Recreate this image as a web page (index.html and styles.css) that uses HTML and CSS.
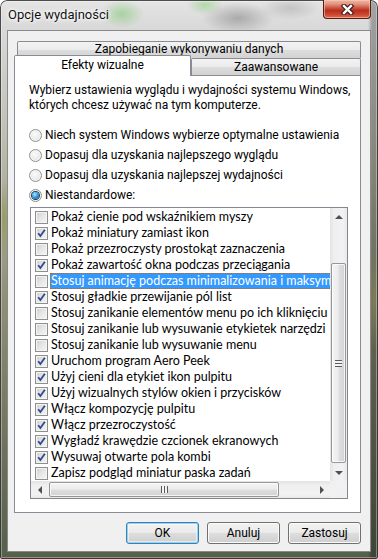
FILE: index.html
```html
<!DOCTYPE html>
<html lang="pl">
<head>
<meta charset="utf-8">
<title>Opcje wydajności</title>
<link rel="stylesheet" href="styles.css">
</head>
<body>
<svg class="defs" width="0" height="0" aria-hidden="true">
  <defs>
    <symbol id="chk" viewBox="0 0 11 11">
      <path d="M2.2 5.2 L4.4 8 L8.8 1.8" fill="none" stroke="#2b4c8c" stroke-width="1.8" stroke-linejoin="miter"/>
    </symbol>
  </defs>
</svg>
<div class="window">
  <div class="titlebar">
    <span class="title">Opcje wydajności</span>
    <div class="close">
      <svg width="15" height="11" viewBox="0 0 15 11"><path d="M4 2 L11 9 M11 2 L4 9" stroke="#3a2020" stroke-width="4.6" stroke-linecap="square"/><path d="M4 2 L11 9 M11 2 L4 9" stroke="#ffffff" stroke-width="2.4" stroke-linecap="square"/></svg>
    </div>
  </div>
  <div class="client">
    <div class="tabs">
      <div class="tabrow row1"><div class="tab wide">Zapobieganie wykonywaniu danych</div></div>
      <div class="tabrow row2"><div class="tab active">Efekty wizualne</div><div class="tab rest">Zaawansowane</div></div>
    </div>
    <div class="pane">
      <p class="intro">Wybierz ustawienia wyglądu i wydajności systemu Windows,<br>których chcesz używać na tym komputerze.</p>
      <div class="radios">
        <div class="radio"><span class="rb"></span>Niech system Windows wybierze optymalne ustawienia</div>
        <div class="radio"><span class="rb"></span>Dopasuj dla uzyskania najlepszego wyglądu</div>
        <div class="radio"><span class="rb"></span>Dopasuj dla uzyskania najlepszej wydajności</div>
        <div class="radio"><span class="rb on"></span>Niestandardowe:</div>
      </div>
      <div class="listbox">
        <div class="items">
          <div class="item"><span class="cb"></span><span class="lbl">Pokaż cienie pod wskaźnikiem myszy</span></div>
          <div class="item"><span class="cb"><svg><use href="#chk"/></svg></span><span class="lbl">Pokaż miniatury zamiast ikon</span></div>
          <div class="item"><span class="cb"></span><span class="lbl">Pokaż przezroczysty prostokąt zaznaczenia</span></div>
          <div class="item"><span class="cb"><svg><use href="#chk"/></svg></span><span class="lbl">Pokaż zawartość okna podczas przeciągania</span></div>
          <div class="item sel"><span class="cb"></span><span class="lbl">Stosuj animację podczas minimalizowania i maksymalizowania okien</span></div>
          <div class="item"><span class="cb"><svg><use href="#chk"/></svg></span><span class="lbl">Stosuj gładkie przewijanie pól list</span></div>
          <div class="item"><span class="cb"></span><span class="lbl">Stosuj zanikanie elementów menu po ich kliknięciu</span></div>
          <div class="item"><span class="cb"></span><span class="lbl">Stosuj zanikanie lub wysuwanie etykietek narzędzi</span></div>
          <div class="item"><span class="cb"></span><span class="lbl">Stosuj zanikanie lub wysuwanie menu</span></div>
          <div class="item"><span class="cb"><svg><use href="#chk"/></svg></span><span class="lbl">Uruchom program Aero Peek</span></div>
          <div class="item"><span class="cb"><svg><use href="#chk"/></svg></span><span class="lbl">Użyj cieni dla etykiet ikon pulpitu</span></div>
          <div class="item"><span class="cb"><svg><use href="#chk"/></svg></span><span class="lbl">Użyj wizualnych stylów okien i przycisków</span></div>
          <div class="item"><span class="cb"><svg><use href="#chk"/></svg></span><span class="lbl">Włącz kompozycję pulpitu</span></div>
          <div class="item"><span class="cb"><svg><use href="#chk"/></svg></span><span class="lbl">Włącz przezroczystość</span></div>
          <div class="item"><span class="cb"><svg><use href="#chk"/></svg></span><span class="lbl">Wygładź krawędzie czcionek ekranowych</span></div>
          <div class="item"><span class="cb"><svg><use href="#chk"/></svg></span><span class="lbl">Wysuwaj otwarte pola kombi</span></div>
          <div class="item"><span class="cb"></span><span class="lbl">Zapisz podgląd miniatur paska zadań</span></div>
        </div>
        <div class="vscroll">
          <div class="arrow"><span class="tri up"></span></div>
          <div class="vtrack"><div class="vthumb"><span class="hgrip"></span></div></div>
          <div class="arrow"><span class="tri down"></span></div>
        </div>
        <div class="hscroll">
          <div class="arrow"><span class="tri left"></span></div>
          <div class="htrack"><div class="hthumb"><span class="vgrip"></span></div></div>
          <div class="arrow"><span class="tri right"></span></div>
        </div>
        <div class="corner"></div>
      </div>
    </div>
    <div class="buttons">
      <div class="btn default">OK</div>
      <div class="btn">Anuluj</div>
      <div class="btn">Zastosuj</div>
    </div>
  </div>
</div>
</body>
</html>
```
FILE: styles.css
```css
* { box-sizing: border-box; }
html, body { margin: 0; padding: 0; background: #ffffff; }
body {
  width: 378px;
  height: 559px;
  overflow: hidden;
  font-family: Roboto, "Liberation Sans", sans-serif;
  font-size: 12px;
  color: #000;
}
.defs { position: absolute; width: 0; height: 0; overflow: hidden; }

.window {
  width: 378px;
  height: 559px;
  display: flex;
  flex-direction: column;
  border-radius: 7px 7px 2px 2px;
  overflow: hidden;
  box-shadow: inset 0 0 0 1px rgba(35, 35, 35, 0.8), inset 0 0 0 2px rgba(255, 255, 255, 0.35);
  background:
    radial-gradient(ellipse 22px 14px at 122px 14px, rgba(150, 205, 140, 0.75), rgba(150, 205, 140, 0) 100%),
    radial-gradient(ellipse 18px 10px at 205px 5px, rgba(160, 212, 150, 0.75), rgba(160, 212, 150, 0) 100%),
    radial-gradient(ellipse 36px 16px at 238px 18px, rgba(120, 120, 120, 0.5), rgba(120, 120, 120, 0) 100%),
    radial-gradient(ellipse 30px 12px at 290px 8px, rgba(150, 150, 150, 0.4), rgba(150, 150, 150, 0) 100%),
    radial-gradient(ellipse 8px 40px at 4px 220px, rgba(150, 150, 95, 0.8), rgba(150, 150, 95, 0) 100%),
    radial-gradient(ellipse 8px 50px at 374px 300px, rgba(140, 140, 90, 0.6), rgba(140, 140, 90, 0) 100%),
    linear-gradient(to right, rgba(0, 0, 0, 0) 0, rgba(0, 0, 0, 0) 368px, rgba(0, 0, 0, 0.28) 372px),
    linear-gradient(to bottom, #e4e4e4 0px, #d8d8d8 30px, #bbbbac 150px, #8f8f76 300px, #6f715c 450px, #53604a 559px);
}

.titlebar {
  height: 30px;
  flex: none;
  display: flex;
  align-items: flex-start;
  padding-left: 8px;
}
.title {
  margin-top: 7px;
  font-size: 13px;
  line-height: 16px;
  color: #111;
  text-shadow: 0 0 6px #fff, 0 0 4px #fff, 0 0 2px #fff;
}
.close {
  margin-left: auto;
  margin-right: 7px;
  width: 48px;
  height: 19px;
  border: 1px solid #4f1c16;
  border-top: none;
  border-radius: 0 0 4px 4px;
  background: linear-gradient(#efb7a6 0%, #e39680 22%, #cf5a44 42%, #b92f1f 58%, #c9432e 78%, #e26a4f 100%);
  box-shadow: inset 0 0 0 1px rgba(255, 210, 190, 0.55);
  display: flex;
  align-items: center;
  justify-content: center;
}
.close svg { display: block; }

.client {
  flex: 1;
  margin: 0 7px 7px 7px;
  border: 1px solid rgba(70, 70, 70, 0.6);
  background: #f0f0f0;
  padding: 10px 9px 7px 6px;
  display: flex;
  flex-direction: column;
}

.tabrow { display: flex; height: 17px; }
.row1 { padding-left: 3px; }
.row2 { align-items: flex-end; }
.tab {
  border: 1px solid #898c95;
  border-bottom: none;
  border-radius: 2px 2px 0 0;
  background: linear-gradient(#f3f3f3 0%, #ebebeb 48%, #dddddd 52%, #d2d2d2 100%);
  text-align: center;
  line-height: 15px;
  height: 17px;
  white-space: nowrap;
}
.tab.wide { flex: 1; }
.tab.rest { flex: 1; line-height: 16px; }
.tab.active {
  width: 177px;
  height: 21px;
  margin-bottom: -1px;
  background: #ffffff;
  position: relative;
  z-index: 1;
  line-height: 19px;
}

.pane {
  height: 438px;
  flex: none;
  border: 1px solid #898c95;
  background: #ffffff;
  padding: 7px 12px 0 14px;
}
.intro { margin: 0; line-height: 15px; white-space: nowrap; }
.radios { margin-top: 12px; }
.radio {
  height: 20px;
  display: flex;
  align-items: center;
  white-space: nowrap;
}
.rb {
  flex: none;
  width: 13px;
  height: 13px;
  margin-right: 3px;
  border-radius: 50%;
  border: 1px solid #8e8f8f;
  background: radial-gradient(circle at 45% 40%, #fbfbfb 0%, #eeeeee 45%, #d2d2d2 100%);
  box-shadow: inset 0 0 0 1px #f6f6f6;
  display: flex;
  align-items: center;
  justify-content: center;
}
.rb.on::after {
  content: "";
  width: 7px;
  height: 7px;
  border-radius: 50%;
  background: radial-gradient(circle at 40% 35%, #a8ecff 0%, #3a9de0 45%, #124f8c 90%);
  box-shadow: 0 0 0 1px #1b3b5e;
}

.listbox {
  margin-top: 2px;
  margin-left: 1px;
  width: 318px;
  height: 292px;
  border: 1px solid #828790;
  display: grid;
  grid-template-columns: 299px 17px;
  grid-template-rows: 273px 17px;
  background: #ffffff;
}
.items {
  overflow: hidden;
  padding-top: 1px;
  font-family: Lato, Roboto, sans-serif;
  font-size: 12.5px;
}
.item {
  height: 16px;
  display: flex;
  align-items: center;
  padding-left: 4px;
  white-space: nowrap;
}
.cb {
  flex: none;
  width: 13px;
  height: 13px;
  border: 1px solid #8e8f8f;
  background: linear-gradient(135deg, #cfd0d2 0%, #e6e6e7 50%, #f6f6f6 100%);
  box-shadow: inset 0 0 0 1px #f3f3f3;
}
.cb svg { display: block; width: 11px; height: 11px; }
.lbl {
  margin-left: 2px;
  border: 1px solid transparent;
  line-height: 14px;
}
.item.sel .lbl {
  background: #3399ff;
  color: #ffffff;
  border: 1px dotted #cc6600;
}

.vscroll {
  grid-column: 2;
  grid-row: 1;
  display: flex;
  flex-direction: column;
  background: linear-gradient(to right, #e4e4e4 0%, #efefef 25%, #f2f2f2 75%, #e8e8e8 100%);
}
.hscroll {
  grid-column: 1;
  grid-row: 2;
  display: flex;
  background: linear-gradient(to bottom, #e4e4e4 0%, #efefef 25%, #f2f2f2 75%, #e8e8e8 100%);
}
.corner { grid-column: 2; grid-row: 2; background: #f0f0f0; }
.arrow {
  flex: none;
  width: 17px;
  height: 17px;
  display: flex;
  align-items: center;
  justify-content: center;
}
.tri { width: 0; height: 0; }
.tri.up { border-left: 4px solid transparent; border-right: 4px solid transparent; border-bottom: 4px solid #505050; }
.tri.down { border-left: 4px solid transparent; border-right: 4px solid transparent; border-top: 4px solid #505050; }
.tri.left { border-top: 4px solid transparent; border-bottom: 4px solid transparent; border-right: 4px solid #505050; }
.tri.right { border-top: 4px solid transparent; border-bottom: 4px solid transparent; border-left: 4px solid #505050; }

.vtrack { flex: 1; display: flex; flex-direction: column; }
.vthumb {
  margin: 38px 1px 0 1px;
  height: 200px;
  border: 1px solid #979797;
  border-radius: 2px;
  background: linear-gradient(to right, #f4f4f4 0%, #ececec 45%, #dedede 55%, #d2d2d2 100%);
  box-shadow: inset 0 0 0 1px rgba(255, 255, 255, 0.75);
  display: flex;
  align-items: center;
  justify-content: center;
}
.htrack { flex: 1; display: flex; }
.hthumb {
  margin: 1px 0 1px 1px;
  width: 230px;
  border: 1px solid #979797;
  border-radius: 2px;
  background: linear-gradient(to bottom, #f4f4f4 0%, #ececec 45%, #dedede 55%, #d2d2d2 100%);
  box-shadow: inset 0 0 0 1px rgba(255, 255, 255, 0.75);
  display: flex;
  align-items: center;
  justify-content: center;
}
.vgrip {
  width: 7px;
  height: 7px;
  background: repeating-linear-gradient(to right, #5a5a5a 0 1px, #f4f4f4 1px 3px);
}
.hgrip {
  width: 7px;
  height: 7px;
  background: repeating-linear-gradient(to bottom, #5a5a5a 0 1px, #f4f4f4 1px 3px);
}

.buttons {
  margin-top: 9px;
  display: flex;
  justify-content: flex-end;
  gap: 8px;
}
.btn {
  width: 73px;
  height: 22px;
  border: 1px solid #707070;
  border-radius: 3px;
  background: linear-gradient(#f2f2f2 0%, #ebebeb 47%, #dddddd 52%, #cfcfcf 100%);
  box-shadow: inset 0 0 0 1px #fbfbfb;
  text-align: center;
  line-height: 20px;
}
.btn.default {
  border-color: #3c7fb1;
  box-shadow: inset 0 0 0 1px #8fd4f7, inset 0 0 0 2px rgba(255, 255, 255, 0.5);
}
```
